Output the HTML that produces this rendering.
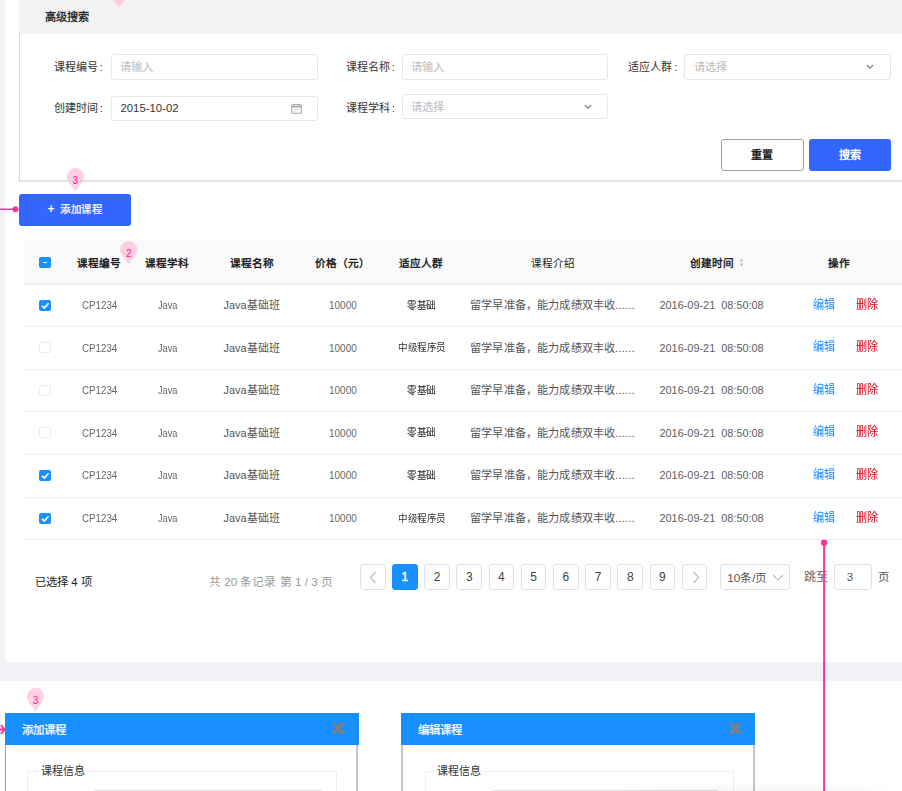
<!DOCTYPE html>
<html lang="zh-CN"><head><meta charset="utf-8">
<style>
*{box-sizing:border-box;margin:0;padding:0}
html,body{width:902px;height:791px;overflow:hidden;background:#fff;font-family:"Liberation Sans",sans-serif;color:#333}
.a{position:absolute;white-space:nowrap}
#bg{position:absolute;left:0;top:0;width:902px;height:681px;background:#f0f2f5}
#card{position:absolute;left:5px;top:-10px;width:910px;height:671.5px;background:#fff;border-radius:4px}
#shead{position:absolute;left:18.5px;top:0;width:900px;height:33.5px;background:#f2f2f2}
#sbody{position:absolute;left:19px;top:33px;width:900px;height:149px;border-left:1px solid #d9d9d9;border-bottom:2px solid #e4e4e4}
.lbl{position:absolute;font-size:11px;color:#333;line-height:14px}
.inp{position:absolute;height:25.5px;border:1px solid #e6e6e6;border-radius:3px;background:#fff}
.ph{position:absolute;font-size:11.2px;color:#bdbdbd;line-height:14px}
.btn{position:absolute;border-radius:3px;text-align:center;font-weight:bold;font-size:11px}
.th{position:absolute;font-size:10.6px;font-weight:bold;color:#222;line-height:14px;top:256px}
.td{position:absolute;font-size:11px;color:#555;line-height:14px}
.tdc{color:#666;font-size:10px;transform:scaleX(0.975);transform-origin:0 0}
.tdv{color:#666;font-size:10px;transform:scaleX(0.92);transform-origin:0 0}
.tdj{font-size:10.9px}
.tdn{font-size:10px;color:#666}
.tdl{font-size:10px;color:#333;transform:scaleX(0.955);transform-origin:0 0}
.tdb{-webkit-text-stroke:0.12px #333}
.tdi{font-size:11.2px;letter-spacing:0.17px}
.tdt{font-size:10.9px;color:#606060}
.tde{font-size:12px;color:#1a8cff;transform:scaleX(0.93);transform-origin:0 0}
.tdd{font-size:12px;color:#d9001b;transform:scaleX(0.93);transform-origin:0 0}
.cb{position:absolute;width:12.5px;height:11px;border-radius:2px}
.cbon{background:#1890ff}
.cboff{border:1px solid #ececec;background:#fff}
.hline{position:absolute;left:24px;width:880px;height:1.2px;background:#ececec}
.pg{position:absolute;top:564px;width:25.7px;height:25.7px;border:1px solid #e0e0e0;border-radius:3px;font-size:12px;color:#444;text-align:center;line-height:24px;background:#fff}
.pin{position:absolute;width:17.5px;height:23px}
.dlg{position:absolute;top:712.8px;height:90px;border-left:1.3px solid #a0a0a0;border-right:2px solid #c4c4c4;background:#fff}
.dhead{position:absolute;top:712.8px;height:32px;background:#188fff}
</style></head><body>
<div id="bg"></div>
<div id="card"></div>

<!-- search panel -->
<div id="shead"></div>
<div class="a" style="left:44.5px;top:10px;font-size:11.2px;color:#222;-webkit-text-stroke:0.32px #222;line-height:14px">高级搜索</div>
<div id="sbody"></div>

<div class="lbl" style="left:53.5px;top:59.8px">课程编号<span style="margin-left:2.2px">:</span></div>
<div class="inp" style="left:111px;top:54px;width:206.5px"></div>
<div class="ph" style="left:120px;top:60px">请输入</div>

<div class="lbl" style="left:345.5px;top:60px">课程名称<span style="margin-left:2.2px">:</span></div>
<div class="inp" style="left:402px;top:54px;width:206px"></div>
<div class="ph" style="left:411px;top:60px">请输入</div>

<div class="lbl" style="left:628px;top:60px">适应人群<span style="margin-left:2.2px">:</span></div>
<div class="inp" style="left:684px;top:54px;width:207px"></div>
<div class="ph" style="left:694px;top:60px">请选择</div>
<svg class="a" style="left:865.5px;top:64px" width="8" height="6" viewBox="0 0 8 6"><path d="M0.8 0.9 L4 4.3 L7.2 0.9" fill="none" stroke="#8e8e99" stroke-width="1.4"/></svg>

<div class="lbl" style="left:53.5px;top:101px">创建时间<span style="margin-left:2.2px">:</span></div>
<div class="inp" style="left:111px;top:95.5px;width:206.5px"></div>
<div class="a" style="left:120.5px;top:101px;font-size:11.35px;color:#333;line-height:14px">2015-10-02</div>
<svg class="a" style="left:291px;top:103px" width="11" height="11" viewBox="0 0 11 11"><rect x="0.7" y="1.7" width="9.6" height="8.6" rx="1.3" fill="none" stroke="#a3a3a3" stroke-width="1.1"/><path d="M0.8 3.6 H10.2" stroke="#a3a3a3" stroke-width="1.4"/><path d="M3 0.6 V2.4 M8 0.6 V2.4" stroke="#a3a3a3" stroke-width="1"/><path d="M2.5 6 H8.5 M2.5 8 H6.5" stroke="#d0d0d0" stroke-width="0.9"/></svg>

<div class="lbl" style="left:345.5px;top:101px">课程学科<span style="margin-left:2.2px">:</span></div>
<div class="inp" style="left:402px;top:94.3px;width:206px;height:25px"></div>
<div class="ph" style="left:411px;top:100px">请选择</div>
<svg class="a" style="left:583.5px;top:104.2px" width="8" height="6" viewBox="0 0 8 6"><path d="M0.8 0.9 L4 4.3 L7.2 0.9" fill="none" stroke="#8e8e99" stroke-width="1.4"/></svg>

<div class="btn" style="left:721px;top:139px;width:82.5px;height:32px;border:1px solid #a3a3a3;background:#fff;color:#222;line-height:30px">重置</div>
<div class="btn" style="left:809px;top:139px;width:82px;height:32px;background:#3366ff;color:#fff;line-height:32px">搜索</div>

<!-- add button -->
<div class="btn" style="left:19px;top:193.5px;width:112px;height:32px;background:#3366ff"></div><div class="a" style="left:47.5px;top:202px;font-size:12px;font-weight:bold;color:#fff;line-height:14px">+</div><div class="a" style="left:60.2px;top:203.3px;font-size:10.4px;letter-spacing:0.45px;color:#fff;line-height:14px;-webkit-text-stroke:0.25px #fff">添加课程</div>

<!-- table header -->
<div class="a" style="left:24px;top:240px;width:880px;height:43.5px;background:#fafafa"></div>
<div class="hline" style="top:283px;height:1.8px;background:#ececec"></div>
<div class="cb cbon" style="left:38.5px;top:256.5px"><div style="position:absolute;left:4.5px;top:5px;width:4px;height:1.5px;background:#fff"></div></div>
<div class="th" style="left:76.5px">课程编号</div>
<div class="th" style="left:145px">课程学科</div>
<div class="th" style="left:229.5px">课程名称</div>
<div class="th" style="left:314.5px">价格（元）</div>
<div class="th" style="left:398.5px">适应人群</div>
<div class="th" style="left:530.5px;font-weight:normal">课程介绍</div>
<div class="th" style="left:689.5px">创建时间</div>
<svg class="a" style="left:738.5px;top:258px" width="5" height="9" viewBox="0 0 5 9"><path d="M2.5 0.5 L4.5 3.5 H0.5Z M2.5 8.5 L4.5 5.5 H0.5Z" fill="#c0c0c0"/></svg>
<div class="th" style="left:828px">操作</div>

<div class="hline" style="top:326.1px"></div>
<div class="cb cbon" style="left:38.5px;top:299.5px"><svg style="position:absolute;left:0;top:0" width="12.5" height="11" viewBox="0 0 12.5 11"><path d="M3 5.8 L5.3 8 L9.6 3.3" fill="none" stroke="#fff" stroke-width="1.6"/></svg></div>
<div class="td tdc" style="left:81.5px;top:299px">CP1234</div>
<div class="td tdv" style="left:157.5px;top:299px">Java</div>
<div class="td tdj" style="left:223.5px;top:298px">Java基础班</div>
<div class="td tdn" style="left:329px;top:299px">10000</div>
<div class="td tdl tdb" style="left:407px;top:298.5px">零基础</div>
<div class="td tdi" style="left:470px;top:298px">留学早准备，能力成绩双丰收......</div>
<div class="td tdt" style="left:659.5px;top:298px">2016-09-21&nbsp;&nbsp;08:50:08</div>
<div class="td tde" style="left:812.5px;top:297.5px">编辑</div>
<div class="td tdd" style="left:856px;top:297.5px">删除</div>
<div class="hline" style="top:368.7px"></div>
<div class="cb cboff" style="left:38.5px;top:342.1px"></div>
<div class="td tdc" style="left:81.5px;top:341.6px">CP1234</div>
<div class="td tdv" style="left:157.5px;top:341.6px">Java</div>
<div class="td tdj" style="left:223.5px;top:340.6px">Java基础班</div>
<div class="td tdn" style="left:329px;top:341.6px">10000</div>
<div class="td tdl" style="left:397.5px;top:341.1px">中级程序员</div>
<div class="td tdi" style="left:470px;top:340.6px">留学早准备，能力成绩双丰收......</div>
<div class="td tdt" style="left:659.5px;top:340.6px">2016-09-21&nbsp;&nbsp;08:50:08</div>
<div class="td tde" style="left:812.5px;top:340.1px">编辑</div>
<div class="td tdd" style="left:856px;top:340.1px">删除</div>
<div class="hline" style="top:411.3px"></div>
<div class="cb cboff" style="left:38.5px;top:384.7px"></div>
<div class="td tdc" style="left:81.5px;top:384.2px">CP1234</div>
<div class="td tdv" style="left:157.5px;top:384.2px">Java</div>
<div class="td tdj" style="left:223.5px;top:383.2px">Java基础班</div>
<div class="td tdn" style="left:329px;top:384.2px">10000</div>
<div class="td tdl tdb" style="left:407px;top:383.7px">零基础</div>
<div class="td tdi" style="left:470px;top:383.2px">留学早准备，能力成绩双丰收......</div>
<div class="td tdt" style="left:659.5px;top:383.2px">2016-09-21&nbsp;&nbsp;08:50:08</div>
<div class="td tde" style="left:812.5px;top:382.7px">编辑</div>
<div class="td tdd" style="left:856px;top:382.7px">删除</div>
<div class="hline" style="top:453.9px"></div>
<div class="cb cboff" style="left:38.5px;top:427.3px"></div>
<div class="td tdc" style="left:81.5px;top:426.8px">CP1234</div>
<div class="td tdv" style="left:157.5px;top:426.8px">Java</div>
<div class="td tdj" style="left:223.5px;top:425.8px">Java基础班</div>
<div class="td tdn" style="left:329px;top:426.8px">10000</div>
<div class="td tdl tdb" style="left:407px;top:426.3px">零基础</div>
<div class="td tdi" style="left:470px;top:425.8px">留学早准备，能力成绩双丰收......</div>
<div class="td tdt" style="left:659.5px;top:425.8px">2016-09-21&nbsp;&nbsp;08:50:08</div>
<div class="td tde" style="left:812.5px;top:425.3px">编辑</div>
<div class="td tdd" style="left:856px;top:425.3px">删除</div>
<div class="hline" style="top:496.5px"></div>
<div class="cb cbon" style="left:38.5px;top:469.9px"><svg style="position:absolute;left:0;top:0" width="12.5" height="11" viewBox="0 0 12.5 11"><path d="M3 5.8 L5.3 8 L9.6 3.3" fill="none" stroke="#fff" stroke-width="1.6"/></svg></div>
<div class="td tdc" style="left:81.5px;top:469.4px">CP1234</div>
<div class="td tdv" style="left:157.5px;top:469.4px">Java</div>
<div class="td tdj" style="left:223.5px;top:468.4px">Java基础班</div>
<div class="td tdn" style="left:329px;top:469.4px">10000</div>
<div class="td tdl tdb" style="left:407px;top:468.9px">零基础</div>
<div class="td tdi" style="left:470px;top:468.4px">留学早准备，能力成绩双丰收......</div>
<div class="td tdt" style="left:659.5px;top:468.4px">2016-09-21&nbsp;&nbsp;08:50:08</div>
<div class="td tde" style="left:812.5px;top:467.9px">编辑</div>
<div class="td tdd" style="left:856px;top:467.9px">删除</div>
<div class="hline" style="top:539.1px"></div>
<div class="cb cbon" style="left:38.5px;top:512.5px"><svg style="position:absolute;left:0;top:0" width="12.5" height="11" viewBox="0 0 12.5 11"><path d="M3 5.8 L5.3 8 L9.6 3.3" fill="none" stroke="#fff" stroke-width="1.6"/></svg></div>
<div class="td tdc" style="left:81.5px;top:512px">CP1234</div>
<div class="td tdv" style="left:157.5px;top:512px">Java</div>
<div class="td tdj" style="left:223.5px;top:511px">Java基础班</div>
<div class="td tdn" style="left:329px;top:512px">10000</div>
<div class="td tdl" style="left:397.5px;top:511.5px">中级程序员</div>
<div class="td tdi" style="left:470px;top:511px">留学早准备，能力成绩双丰收......</div>
<div class="td tdt" style="left:659.5px;top:511px">2016-09-21&nbsp;&nbsp;08:50:08</div>
<div class="td tde" style="left:812.5px;top:510.5px">编辑</div>
<div class="td tdd" style="left:856px;top:510.5px">删除</div>


<!-- footer -->
<div class="a" style="left:35px;top:575px;font-size:11.3px;color:#222;line-height:14px">已选择 4 项</div>
<div class="a" style="left:209px;top:575px;font-size:11.7px;color:#999;line-height:14px">共 20 条记录 第 1 / 3 页</div>

<div class="pg" style="left:360px"><svg style="position:absolute;left:8px;top:6px" width="8" height="13" viewBox="0 0 8 13"><path d="M6.5 1 L1.5 6.5 L6.5 12" fill="none" stroke="#bbb" stroke-width="1.2"/></svg></div>
<div class="pg" style="left:392px;background:#1890ff;border-color:#1890ff;color:#fff;-webkit-text-stroke:0.45px #fff">1</div>
<div class="pg" style="left:424.3px">2</div>
<div class="pg" style="left:456.4px">3</div>
<div class="pg" style="left:488.6px">4</div>
<div class="pg" style="left:520.8px">5</div>
<div class="pg" style="left:553.1px">6</div>
<div class="pg" style="left:585.3px">7</div>
<div class="pg" style="left:617.4px">8</div>
<div class="pg" style="left:649.6px">9</div>
<div class="pg" style="left:681.8px"><svg style="position:absolute;left:9px;top:6px" width="8" height="13" viewBox="0 0 8 13"><path d="M1.5 1 L6.5 6.5 L1.5 12" fill="none" stroke="#bbb" stroke-width="1.2"/></svg></div>

<div class="pg" style="left:719.8px;width:70.7px;text-align:left;padding-left:6.5px;color:#555"><span style="font-size:11.65px;position:relative;top:0.5px">10条/页</span><svg style="position:absolute;left:51px;top:9px" width="12" height="7" viewBox="0 0 12 7"><path d="M1 1 L6 6 L11 1" fill="none" stroke="#bbb" stroke-width="1.1"/></svg></div>
<div class="a" style="left:803.5px;top:570px;font-size:12px;color:#666;line-height:14px">跳至</div>
<div class="pg" style="left:833.5px;width:38px;padding-right:5px;font-size:11.5px;color:#555">3</div>
<div class="a" style="left:878px;top:570px;font-size:11.5px;color:#555;line-height:14px">页</div>

<!-- pins -->

<!-- pink connectors -->

<!-- dialogs -->

<div class="dlg" style="left:5px;width:353px"></div>
<div class="dhead" style="left:5px;width:354px"></div>
<div class="a" style="left:21.5px;top:723px;font-size:11.4px;color:#fff;line-height:14px;-webkit-text-stroke:0.25px #fff">添加课程</div>
<svg class="a" style="left:332px;top:722px" width="12.5" height="13" viewBox="0 0 12.5 13"><path d="M2.4 2.4 L10.1 10.6 M10.1 2.4 L2.4 10.6" stroke="#808080" stroke-width="3.5" stroke-linecap="round"/></svg>
<div class="a" style="left:27.3px;top:771px;width:310px;height:40px;border:1px solid #f0f0f0"></div>
<div class="a" style="left:41px;top:764px;font-size:11px;color:#333;line-height:14px">课程信息</div>
<div class="a" style="left:95px;top:790px;width:226px;height:3px;background:#e2e2e2"></div>

<div class="dlg" style="left:401px;width:354px;border-left:2px solid #c4c4c4"></div>
<div class="dhead" style="left:401px;width:354px"></div>
<div class="a" style="left:418.4px;top:723px;font-size:11.4px;color:#fff;line-height:14px;-webkit-text-stroke:0.25px #fff">编辑课程</div>
<svg class="a" style="left:728.5px;top:722px" width="12.5" height="13" viewBox="0 0 12.5 13"><path d="M2.4 2.4 L10.1 10.6 M10.1 2.4 L2.4 10.6" stroke="#808080" stroke-width="3.5" stroke-linecap="round"/></svg>
<div class="a" style="left:424.5px;top:771px;width:309px;height:40px;border:1px solid #f0f0f0"></div>
<div class="a" style="left:437px;top:764px;font-size:11px;color:#333;line-height:14px">课程信息</div>
<div class="a" style="left:492px;top:790px;width:226px;height:3px;background:#e2e2e2"></div>


<div class="a" style="left:610px;top:783px;width:292px;height:8px;background:linear-gradient(rgba(0,0,0,0),rgba(0,0,0,0.04));-webkit-mask-image:linear-gradient(to right,transparent,#000 25%,#000 75%,transparent)"></div>
<svg style="position:absolute;left:0;top:0" width="902" height="791" viewBox="0 0 902 791"><path d="M119 7.8 L111.72 -2.21 A9 9 0 1 1 126.28 -2.21 Z" fill="rgb(255,180,217)" fill-opacity="0.62"/><path d="M75.4 191.6 L68.35 181.53 A8.6 8.6 0 1 1 82.45 181.53 Z" fill="rgb(255,180,217)" fill-opacity="0.62"/><text x="75.4" y="184.1" font-size="10" text-anchor="middle" fill="#ff1a8c" font-family="Liberation Sans">3</text><path d="M128.8 264.6 L121.75 254.53 A8.6 8.6 0 1 1 135.85 254.53 Z" fill="rgb(255,180,217)" fill-opacity="0.62"/><text x="128.8" y="257.1" font-size="10" text-anchor="middle" fill="#ff1a8c" font-family="Liberation Sans">2</text><path d="M35.5 711.4 L28.45 701.33 A8.6 8.6 0 1 1 42.55 701.33 Z" fill="rgb(255,180,217)" fill-opacity="0.62"/><text x="35.5" y="703.9" font-size="10" text-anchor="middle" fill="#ff1a8c" font-family="Liberation Sans">3</text><path d="M0 209.3 H15" stroke="#ff3399" stroke-width="1.6"/><circle cx="15.5" cy="209.3" r="3" fill="#ff3399"/><path d="M824.1 543 V791" stroke="#ff3399" stroke-width="2"/><circle cx="824.1" cy="542.7" r="3.1" fill="#ff3399"/><path d="M0 729.5 H4.5 M1 725 L4.6 729.5 L1 734" fill="none" stroke="#ff3399" stroke-width="2"/></svg>
</body></html>
